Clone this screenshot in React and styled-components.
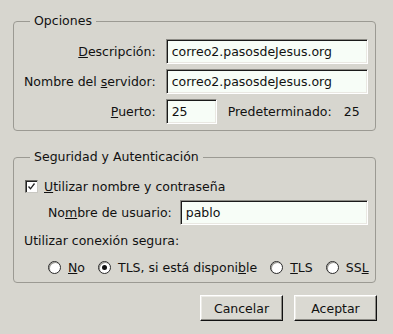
import * as React from 'react';
import styled, { createGlobalStyle } from 'styled-components';

const GlobalStyle = createGlobalStyle`
  html, body {
    margin: 0;
    background: #d7d6cf;
  }
  body {
    font-family: "DejaVu Sans", "Liberation Sans", sans-serif;
    font-size: 12.5px;
    color: #111;
  }
`;

const Page = styled.div`
  box-sizing: border-box;
  width: 393px;
  height: 334px;
  padding: 13px 17px 0 13px;
  background: #d7d6cf;
`;

const Frame = styled.fieldset`
  margin: ${(p) => (p.$first ? '0' : '18px 0 0')};
  padding: ${(p) => p.$pad};
  border: 1px solid #9b9a93;
  border-radius: 4px;
  min-width: 0;
`;

const Legend = styled.legend`
  margin-left: 6px;
  padding: 0 4px;
  line-height: 16px;
`;

const FormGrid = styled.div`
  display: grid;
  grid-template-columns: auto 1fr;
  column-gap: 10px;
  row-gap: 5px;
  align-items: center;
`;

const Label = styled.label`
  text-align: right;
  white-space: nowrap;
`;

const Field = styled.input`
  box-sizing: border-box;
  height: 25px;
  width: ${(p) => p.$width || '100%'};
  margin: 0;
  padding: 0 5px;
  font: inherit;
  color: #111;
  background: #f7fdf7;
  border: 1px solid;
  border-color: #8d8c86 #fff #fff #8d8c86;
  box-shadow: inset 1px 1px 0 #1a1a1a, inset -1px -1px 0 #e9e8e2;
  outline: none;
`;

const PortCell = styled.div`
  display: flex;
  align-items: center;
`;

const Hint = styled.span`
  margin-left: ${(p) => p.$gap}px;
  white-space: nowrap;
`;

const Row = styled.div`
  display: flex;
  align-items: center;
  margin-top: ${(p) => p.$top || 0}px;
  padding-left: ${(p) => p.$indent || 0}px;
  gap: ${(p) => p.$gap || 0}px;
  min-height: 16px;
`;

const CheckBox = styled.span`
  box-sizing: border-box;
  width: 13px;
  height: 13px;
  margin-left: 1px;
  display: inline-flex;
  align-items: center;
  justify-content: center;
  background: #fff;
  border: 1px solid;
  border-color: #6c6b66 #c9c8c2 #c9c8c2 #6c6b66;
  box-shadow: inset 1px 1px 0 #222;
`;

const RadioItem = styled.label`
  display: flex;
  align-items: center;
  gap: 7px;
  white-space: nowrap;
`;

const RadioDot = styled.span`
  box-sizing: border-box;
  width: 13px;
  height: 13px;
  border-radius: 50%;
  background: #fff;
  border: 1px solid #2a2a2a;
  box-shadow: inset 1px 1px 0 #9a9993;
  display: inline-flex;
  align-items: center;
  justify-content: center;

  &::after {
    content: '';
    display: ${(p) => (p.$on ? 'block' : 'none')};
    width: 5px;
    height: 5px;
    border-radius: 50%;
    background: #111;
  }
`;

const UserField = styled(Field)`
  flex: 1;
  width: auto;
`;

const Buttons = styled.div`
  display: flex;
  justify-content: flex-end;
  gap: 11px;
  margin: 12px -1px 0 0;
`;

const Button = styled.button`
  box-sizing: border-box;
  width: 83px;
  height: 26px;
  margin: 0;
  padding: 0;
  font: inherit;
  color: #111;
  background: #dad9d2;
  border: 1px solid;
  border-color: #fff #111 #111 #fff;
  box-shadow: inset -1px -1px 0 #8d8c86, inset 1px 1px 0 #ecebe6;
`;

const Check = () => (
  <svg width="9" height="9" viewBox="0 0 9 9">
    <path d="M1.5 4.5 L3.5 6.8 L7.5 1.5" fill="none" stroke="#222" strokeWidth="1.3" />
  </svg>
);

export default function App() {
  return (
    <Page>
      <GlobalStyle />
      <Frame $first $pad="10px 7px 6px 10px">
        <Legend>Opciones</Legend>
        <FormGrid>
          <Label><u>D</u>escripción:</Label>
          <Field defaultValue="correo2.pasosdeJesus.org" />
          <Label>Nombre del <u>s</u>ervidor:</Label>
          <Field defaultValue="correo2.pasosdeJesus.org" />
          <Label><u>P</u>uerto:</Label>
          <PortCell>
            <Field $width="51px" defaultValue="25" />
            <Hint $gap={11}>Predeterminado:</Hint>
            <Hint $gap={12}>25</Hint>
          </PortCell>
        </FormGrid>
      </Frame>

      <Frame $pad="0 7px 7px 10px">
        <Legend>Seguridad y Autenticación</Legend>
        <Row $top={13} $gap={6}>
          <CheckBox><Check /></CheckBox>
          <span><u>U</u>tilizar nombre y contraseña</span>
        </Row>
        <Row $top={6} $indent={24} $gap={8}>
          <span>No<u>m</u>bre de usuario:</span>
          <UserField defaultValue="pablo" />
        </Row>
        <Row $top={7}>Utilizar conexión segura:</Row>
        <Row $top={11} $indent={24} $gap={13}>
          <RadioItem><RadioDot /><span><u>N</u>o</span></RadioItem>
          <RadioItem><RadioDot $on /><span>TLS, si está disponi<u>b</u>le</span></RadioItem>
          <RadioItem><RadioDot /><span><u>T</u>LS</span></RadioItem>
          <RadioItem><RadioDot /><span>SS<u>L</u></span></RadioItem>
        </Row>
      </Frame>

      <Buttons>
        <Button>Cancelar</Button>
        <Button>Aceptar</Button>
      </Buttons>
    </Page>
  );
}
